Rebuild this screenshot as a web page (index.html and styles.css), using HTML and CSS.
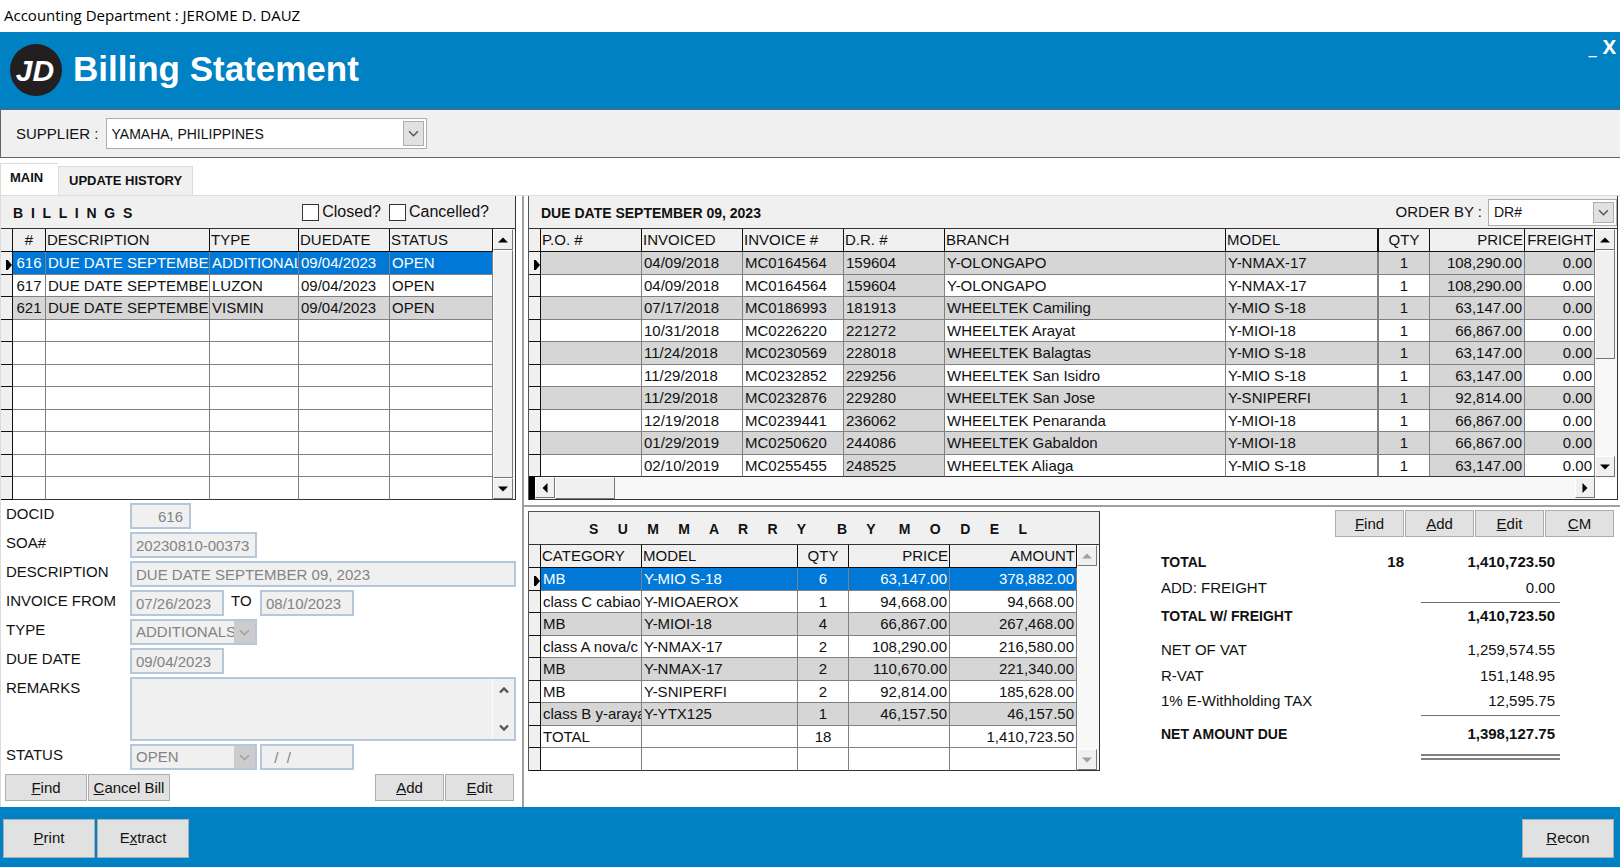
FILE: index.html
```html
<!DOCTYPE html>
<html lang="en">
<head>
    <meta charset="UTF-8">
    <meta name="viewport" content="width=device-width, initial-scale=1.0">
    <title>Billing Statement</title>
    <link rel="stylesheet" href="styles.css">
</head>
<body>
    <!-- shared arrow shapes -->
    <svg class="defs" width="0" height="0" aria-hidden="true">
        <symbol id="chev" viewBox="0 0 10 6"><path d="M1 1l4 4 4-4" fill="none" stroke="currentColor" stroke-width="1.4"/></symbol>
        <symbol id="chev-bold" viewBox="0 0 10 6"><path d="M1 1l4 4 4-4" fill="none" stroke="currentColor" stroke-width="2.4"/></symbol>
        <symbol id="tri" viewBox="0 0 10 6"><path d="M0 5.5h10L5 .5z" fill="currentColor"/></symbol>
    </svg>

    <div class="titlebar">Accounting Department : JEROME D. DAUZ</div>

    <header class="header">
        <svg class="logo" viewBox="0 0 52 52" role="img" aria-label="JD">
            <circle cx="26" cy="26" r="26" fill="#231f20"/>
            <text x="25" y="37" text-anchor="middle">JD</text>
        </svg>
        <h1>Billing Statement</h1>
        <div class="window-buttons">
            <button type="button" aria-label="Minimize">_</button>
            <button type="button" aria-label="Close">X</button>
        </div>
    </header>

    <div class="supplier-bar">
        <label for="supplier">SUPPLIER :</label>
        <span class="combo combo-supplier">
            <select id="supplier"><option>YAMAHA, PHILIPPINES</option></select>
            <span class="combo-arrow"><svg><use href="#chev"/></svg></span>
        </span>
    </div>

    <nav class="tabs">
        <button type="button" class="tab active">MAIN</button>
        <button type="button" class="tab">UPDATE HISTORY</button>
    </nav>

    <main class="workspace">
        <section class="left">
            <div class="panel">
                <div class="panel-head">
                    <h2>B  I  L  L  I  N  G  S</h2>
                    <div class="checks">
                        <label><input type="checkbox"> Closed?</label>
                        <label><input type="checkbox"> Cancelled?</label>
                    </div>
                </div>
                <div class="grid-wrap">
                    <table class="grid billings">
                        <colgroup><col class="w-sel"><col class="w-no"><col><col class="w-type"><col class="w-due"><col class="w-status"></colgroup>
                        <thead>
                            <tr><th></th><th class="c">#</th><th>DESCRIPTION</th><th>TYPE</th><th>DUEDATE</th><th>STATUS</th></tr>
                        </thead>
                        <tbody>
                            <tr class="selected"><td class="current"></td><td class="c">616</td><td>DUE DATE SEPTEMBER 09, 2023</td><td>ADDITIONALS</td><td>09/04/2023</td><td>OPEN</td></tr>
                            <tr><td></td><td class="c">617</td><td>DUE DATE SEPTEMBER 09, 2023</td><td>LUZON</td><td>09/04/2023</td><td>OPEN</td></tr>
                            <tr class="alt"><td></td><td class="c">621</td><td>DUE DATE SEPTEMBER 09, 2023</td><td>VISMIN</td><td>09/04/2023</td><td>OPEN</td></tr>
                            <tr><td></td><td></td><td></td><td></td><td></td><td></td></tr>
                            <tr><td></td><td></td><td></td><td></td><td></td><td></td></tr>
                            <tr><td></td><td></td><td></td><td></td><td></td><td></td></tr>
                            <tr><td></td><td></td><td></td><td></td><td></td><td></td></tr>
                            <tr><td></td><td></td><td></td><td></td><td></td><td></td></tr>
                            <tr><td></td><td></td><td></td><td></td><td></td><td></td></tr>
                            <tr><td></td><td></td><td></td><td></td><td></td><td></td></tr>
                            <tr><td></td><td></td><td></td><td></td><td></td><td></td></tr>
                        </tbody>
                    </table>
                    <div class="vscroll">
                        <button type="button" aria-label="Scroll up"><svg><use href="#tri"/></svg></button>
                        <div class="thumb full"></div>
                        <button type="button" class="down" aria-label="Scroll down"><svg><use href="#tri"/></svg></button>
                    </div>
                </div>
            </div>

            <form class="details">
                <label for="docid">DOCID</label>
                <div><input id="docid" class="w-docid" value="616" disabled></div>
                <label for="soa">SOA#</label>
                <div><input id="soa" class="w-soa" value="20230810-00373" disabled></div>
                <label for="desc">DESCRIPTION</label>
                <div><input id="desc" class="w-full" value="DUE DATE SEPTEMBER 09, 2023" disabled></div>
                <label for="from">INVOICE FROM</label>
                <div>
                    <input id="from" class="w-date" value="07/26/2023" disabled>
                    <label for="to" class="to">TO</label>
                    <input id="to" class="w-date" value="08/10/2023" disabled>
                </div>
                <label for="type">TYPE</label>
                <div>
                    <span class="combo disabled w-soa">
                        <select id="type" disabled><option>ADDITIONALS</option></select>
                        <span class="combo-arrow"><svg><use href="#chev"/></svg></span>
                    </span>
                </div>
                <label for="due">DUE DATE</label>
                <div><input id="due" class="w-date" value="09/04/2023" disabled></div>
                <label for="remarks">REMARKS</label>
                <div class="remarks">
                    <textarea id="remarks" disabled></textarea>
                    <span class="remarks-scroll">
                        <svg class="up"><use href="#chev-bold"/></svg>
                        <svg><use href="#chev-bold"/></svg>
                    </span>
                </div>
                <label for="status">STATUS</label>
                <div>
                    <span class="combo disabled w-soa">
                        <select id="status" disabled><option>OPEN</option></select>
                        <span class="combo-arrow"><svg><use href="#chev"/></svg></span>
                    </span>
                    <input class="w-date" value="  /  /" aria-label="Status date" disabled>
                </div>
            </form>

            <div class="left-actions">
                <button type="button" class="btn wide"><u>F</u>ind</button>
                <button type="button" class="btn wide"><u>C</u>ancel Bill</button>
                <span class="spacer"></span>
                <button type="button" class="btn"><u>A</u>dd</button>
                <button type="button" class="btn"><u>E</u>dit</button>
            </div>
        </section>

        <section class="right">
            <div class="right-top">
                <div class="panel bordered">
                    <div class="panel-head">
                        <h2>DUE DATE SEPTEMBER 09, 2023</h2>
                        <div class="order">
                            <label for="order">ORDER BY :</label>
                            <span class="combo combo-order">
                                <select id="order"><option>DR#</option></select>
                                <span class="combo-arrow"><svg><use href="#chev"/></svg></span>
                            </span>
                        </div>
                    </div>
                    <div class="grid-wrap">
                        <div class="grid-main">
                            <table class="grid invoices">
                                <colgroup><col class="w-sel"><col class="w-inv"><col class="w-inv"><col class="w-inv"><col class="w-inv"><col><col class="w-model"><col class="w-qty"><col class="w-price"><col class="w-freight"></colgroup>
                                <thead>
                                    <tr><th></th><th>P.O. #</th><th>INVOICED</th><th>INVOICE #</th><th>D.R. #</th><th>BRANCH</th><th>MODEL</th><th class="c">QTY</th><th class="r">PRICE</th><th class="r">FREIGHT</th></tr>
                                </thead>
                                <tbody>
                                    <tr class="alt"><td class="current"></td><td></td><td>04/09/2018</td><td>MC0164564</td><td>159604</td><td>Y-OLONGAPO</td><td>Y-NMAX-17</td><td class="c">1</td><td class="r">108,290.00</td><td class="r">0.00</td></tr>
                                    <tr><td></td><td></td><td>04/09/2018</td><td>MC0164564</td><td>159604</td><td>Y-OLONGAPO</td><td>Y-NMAX-17</td><td class="c">1</td><td class="r">108,290.00</td><td class="r">0.00</td></tr>
                                    <tr class="alt"><td></td><td></td><td>07/17/2018</td><td>MC0186993</td><td>181913</td><td>WHEELTEK Camiling</td><td>Y-MIO S-18</td><td class="c">1</td><td class="r">63,147.00</td><td class="r">0.00</td></tr>
                                    <tr><td></td><td></td><td>10/31/2018</td><td>MC0226220</td><td>221272</td><td>WHEELTEK Arayat</td><td>Y-MIOI-18</td><td class="c">1</td><td class="r">66,867.00</td><td class="r">0.00</td></tr>
                                    <tr class="alt"><td></td><td></td><td>11/24/2018</td><td>MC0230569</td><td>228018</td><td>WHEELTEK Balagtas</td><td>Y-MIO S-18</td><td class="c">1</td><td class="r">63,147.00</td><td class="r">0.00</td></tr>
                                    <tr><td></td><td></td><td>11/29/2018</td><td>MC0232852</td><td>229256</td><td>WHEELTEK San Isidro</td><td>Y-MIO S-18</td><td class="c">1</td><td class="r">63,147.00</td><td class="r">0.00</td></tr>
                                    <tr class="alt"><td></td><td></td><td>11/29/2018</td><td>MC0232876</td><td>229280</td><td>WHEELTEK San Jose</td><td>Y-SNIPERFI</td><td class="c">1</td><td class="r">92,814.00</td><td class="r">0.00</td></tr>
                                    <tr><td></td><td></td><td>12/19/2018</td><td>MC0239441</td><td>236062</td><td>WHEELTEK Penaranda</td><td>Y-MIOI-18</td><td class="c">1</td><td class="r">66,867.00</td><td class="r">0.00</td></tr>
                                    <tr class="alt"><td></td><td></td><td>01/29/2019</td><td>MC0250620</td><td>244086</td><td>WHEELTEK Gabaldon</td><td>Y-MIOI-18</td><td class="c">1</td><td class="r">66,867.00</td><td class="r">0.00</td></tr>
                                    <tr><td></td><td></td><td>02/10/2019</td><td>MC0255455</td><td>248525</td><td>WHEELTEK Aliaga</td><td>Y-MIO S-18</td><td class="c">1</td><td class="r">63,147.00</td><td class="r">0.00</td></tr>
                                </tbody>
                            </table>
                            <div class="hscroll">
                                <button type="button" class="prev" aria-label="Scroll left"><svg><use href="#tri"/></svg></button>
                                <div class="thumb"></div>
                                <button type="button" class="next" aria-label="Scroll right"><svg><use href="#tri"/></svg></button>
                            </div>
                        </div>
                        <div class="vscroll short">
                            <button type="button" aria-label="Scroll up"><svg><use href="#tri"/></svg></button>
                            <div class="thumb"></div>
                            <button type="button" class="down" aria-label="Scroll down"><svg><use href="#tri"/></svg></button>
                        </div>
                    </div>
                </div>
            </div>

            <div class="right-bottom">
                <div class="panel bordered summary-panel">
                    <div class="panel-head">
                        <h2>S     U     M     M     A     R     R     Y        B     Y      M     O     D     E     L</h2>
                    </div>
                    <div class="grid-wrap">
                        <table class="grid summary">
                            <colgroup><col class="w-sel"><col class="w-inv"><col><col class="w-qty"><col class="w-inv"><col class="w-amount"></colgroup>
                            <thead>
                                <tr><th></th><th>CATEGORY</th><th>MODEL</th><th class="c">QTY</th><th class="r">PRICE</th><th class="r">AMOUNT</th></tr>
                            </thead>
                            <tbody>
                                <tr class="selected"><td class="current"></td><td>MB</td><td>Y-MIO S-18</td><td class="c">6</td><td class="r">63,147.00</td><td class="r">378,882.00</td></tr>
                                <tr><td></td><td>class C cabiao</td><td>Y-MIOAEROX</td><td class="c">1</td><td class="r">94,668.00</td><td class="r">94,668.00</td></tr>
                                <tr class="alt"><td></td><td>MB</td><td>Y-MIOI-18</td><td class="c">4</td><td class="r">66,867.00</td><td class="r">267,468.00</td></tr>
                                <tr><td></td><td>class A nova/c</td><td>Y-NMAX-17</td><td class="c">2</td><td class="r">108,290.00</td><td class="r">216,580.00</td></tr>
                                <tr class="alt"><td></td><td>MB</td><td>Y-NMAX-17</td><td class="c">2</td><td class="r">110,670.00</td><td class="r">221,340.00</td></tr>
                                <tr><td></td><td>MB</td><td>Y-SNIPERFI</td><td class="c">2</td><td class="r">92,814.00</td><td class="r">185,628.00</td></tr>
                                <tr class="alt"><td></td><td>class B y-araya</td><td>Y-YTX125</td><td class="c">1</td><td class="r">46,157.50</td><td class="r">46,157.50</td></tr>
                                <tr><td></td><td>TOTAL</td><td></td><td class="c">18</td><td></td><td class="r">1,410,723.50</td></tr>
                                <tr><td></td><td></td><td></td><td></td><td></td><td></td></tr>
                            </tbody>
                        </table>
                        <div class="vscroll inactive">
                            <button type="button" aria-label="Scroll up" disabled><svg><use href="#tri"/></svg></button>
                            <button type="button" class="down" aria-label="Scroll down" disabled><svg><use href="#tri"/></svg></button>
                        </div>
                    </div>
                </div>

                <div class="totals-side">
                    <div class="totals-actions">
                        <button type="button" class="btn"><u>F</u>ind</button>
                        <button type="button" class="btn"><u>A</u>dd</button>
                        <button type="button" class="btn"><u>E</u>dit</button>
                        <button type="button" class="btn"><u>C</u>M</button>
                    </div>
                    <table class="totals">
                        <colgroup><col><col class="w-count"><col class="w-sum"></colgroup>
                        <tr class="strong"><th>TOTAL</th><td class="count">18</td><td>1,410,723.50</td></tr>
                        <tr class="line"><th>ADD: FREIGHT</th><td></td><td>0.00</td></tr>
                        <tr class="strong"><th>TOTAL W/ FREIGHT</th><td></td><td>1,410,723.50</td></tr>
                        <tr class="gap"><th>NET OF VAT</th><td></td><td>1,259,574.55</td></tr>
                        <tr><th>R-VAT</th><td></td><td>151,148.95</td></tr>
                        <tr class="line"><th>1% E-Withholding TAX</th><td></td><td>12,595.75</td></tr>
                        <tr class="strong net"><th>NET AMOUNT DUE</th><td></td><td>1,398,127.75</td></tr>
                    </table>
                </div>
            </div>
        </section>
    </main>

    <footer class="footer">
        <button type="button" class="btn big"><u>P</u>rint</button>
        <button type="button" class="btn big">E<u>x</u>tract</button>
        <span class="spacer"></span>
        <button type="button" class="btn big"><u>R</u>econ</button>
    </footer>
</body>
</html>
```
FILE: styles.css
```css
* {
    box-sizing: border-box;
}
body {
    display: flex;
    flex-direction: column;
    min-height: 100vh;
    margin: 0;
    background: #fff;
    color: #111;
    font-family: "Liberation Sans", Arial, sans-serif;
    font-size: 15px;
    line-height: 18px;
}
h1, h2 {
    margin: 0;
}
button, input, select, textarea {
    font: inherit;
    color: inherit;
}
.defs {
    position: absolute;
}
.spacer {
    flex: 1;
}

/* title + header */
.titlebar {
    height: 32px;
    padding-left: 4px;
    font-family: "Open Sans", "Noto Sans", sans-serif;
    font-size: 15px;
    line-height: 30px;
    color: #000;
}
.header {
    display: flex;
    align-items: center;
    height: 77px;
    padding: 0 4px 2px 10px;
    background: #0081c3;
    color: #fff;
}
.logo {
    width: 52px;
    height: 52px;
}
.logo text {
    font-size: 30px;
    font-weight: bold;
    font-style: italic;
    fill: #fff;
}
.header h1 {
    flex: 1;
    padding: 0 0 2px 11px;
    font-size: 35px;
    line-height: 40px;
}
.window-buttons {
    display: flex;
    gap: 6px;
    align-self: flex-start;
    padding-top: 4px;
}
.window-buttons button {
    padding: 0;
    border: 0;
    background: none;
    font-family: "Open Sans", sans-serif;
    font-size: 20px;
    font-weight: bold;
    line-height: 22px;
}

/* supplier */
.supplier-bar {
    display: flex;
    align-items: center;
    gap: 7px;
    height: 49px;
    padding-left: 15px;
    background: #f0f0f0;
    border: 1px solid #646464;
    border-right: 0;
}
.combo {
    position: relative;
    display: inline-flex;
    border: 1px solid #abadb3;
    background: #fff;
}
.combo select {
    width: 100%;
    padding: 0 0 0 5px;
    border: 0;
    border-radius: 0;
    appearance: none;
    background: none;
    font-size: 14px;
}
.combo-arrow {
    position: absolute;
    top: 2px;
    right: 2px;
    bottom: 2px;
    display: flex;
    align-items: center;
    justify-content: center;
    width: 21px;
    border: 1px solid #adadad;
    background: #e1e1e1;
    color: #555;
    pointer-events: none;
}
.combo-arrow svg {
    width: 11px;
    height: 7px;
}
.combo-supplier {
    width: 321px;
    height: 31px;
}
.combo-order {
    width: 129px;
    height: 27px;
}

/* tabs */
.tabs {
    display: flex;
    align-items: flex-end;
    height: 38px;
    border-bottom: 1px solid #dcdcdc;
}
.tab {
    height: 29px;
    padding: 0 10px;
    border: 1px solid #dcdcdc;
    border-bottom: 0;
    background: #f0f0f0;
    font-size: 13px;
    font-weight: bold;
}
.tab.active {
    width: 58px;
    height: 32px;
    padding: 0 0 4px 9px;
    border-right: 0;
    background: #fff;
    text-align: left;
}

/* layout */
.workspace {
    display: grid;
    grid-template-columns: 521px minmax(0, 1fr);
    flex: 1;
    border-left: 1px solid #dcdcdc;
}
.left {
    padding-right: 6px;
}
.right {
    display: flex;
    flex-direction: column;
    border-left: 2px solid #a0a0a0;
}
.right-top {
    padding: 0 2px 5px 4px;
    border-bottom: 2px solid #a0a0a0;
}
.right-bottom {
    display: flex;
    align-items: flex-start;
    padding: 3px 6px 0 4px;
}
.panel {
    border-right: 1px solid #333;
    background: #f0f0f0;
}
.panel.bordered {
    border-left: 1px solid #555;
}
.panel-head {
    display: flex;
    align-items: center;
    justify-content: space-between;
    height: 33px;
    padding: 0 12px;
    border-bottom: 1px solid #333;
}
.panel-head h2 {
    padding-top: 2px;
    font-size: 14px;
    line-height: 18px;
    white-space: pre;
}
.checks {
    display: flex;
    gap: 8px;
    padding-right: 14px;
}
.checks label {
    display: flex;
    align-items: center;
    gap: 3px;
    font-size: 16px;
}
.checks input {
    width: 17px;
    height: 17px;
    margin: 0;
    border: 1px solid #333;
    appearance: none;
    background: #fff;
}
.order {
    display: flex;
    align-items: center;
    gap: 6px;
    margin-right: -12px;
}

/* grids */
.grid-wrap {
    display: flex;
}
.grid-main {
    flex: 1;
    min-width: 0;
}
.grid {
    width: 100%;
    table-layout: fixed;
    border-spacing: 0;
    background: #fff;
}
.grid th, .grid td {
    height: 23px;
    padding: 0 2px;
    border-right: 1px solid #808080;
    border-bottom: 1px solid #808080;
    overflow: hidden;
    white-space: nowrap;
    text-align: left;
    text-overflow: clip;
    font-weight: normal;
    line-height: 20px;
}
.grid th {
    padding: 0 1px;
    background: #f0f0f0;
    border-color: #111;
}
.grid tr:nth-child(even) td {
    height: 22px;
}
.grid tbody tr:last-child td {
    border-bottom-color: #333;
}
.grid .alt td {
    background: #d6d6d6;
}
.grid .selected td {
    background: #0078d7;
    color: #fff;
}
.grid th:first-child, .grid tbody tr td:first-child {
    padding: 0;
    background: #f0f0f0;
    border-color: #111;
}
.grid .c {
    text-align: center;
}
.grid .r {
    text-align: right;
}
/* record pointer in the selector column */
.current::before {
    content: "";
    display: block;
    width: 6px;
    height: 10px;
    margin: 4px 0 0 5px;
    background: #000;
    clip-path: polygon(0 0, 30% 0, 100% 50%, 30% 100%, 0 100%);
}
.invoices td:nth-child(5), .invoices td:nth-child(9) {
    background: #d6d6d6;
}
.invoices th:nth-child(7), .invoices td:nth-child(7) {
    border-right-width: 2px;
}
.w-sel { width: 12px; }
.w-no { width: 33px; }
.w-type { width: 89px; }
.w-due { width: 91px; }
.w-status { width: 103px; }
.w-inv { width: 101px; }
.w-model { width: 153px; }
.w-qty { width: 51px; }
.w-price { width: 95px; }
.w-freight { width: 70px; }
.w-amount { width: 127px; }

/* scrollbars */
.vscroll {
    display: flex;
    flex: none;
    flex-direction: column;
    width: 22px;
    padding-right: 2px;
    border-bottom: 1px solid #333;
    background: #f8f8f8;
}
.vscroll button, .hscroll button, .thumb {
    display: flex;
    flex: none;
    align-items: center;
    justify-content: center;
    width: 20px;
    height: 21px;
    padding: 0;
    border: 1px solid;
    border-color: #fff #777 #777 #fff;
    background: #f0f0f0;
    color: #000;
}
.vscroll svg, .hscroll svg {
    width: 10px;
    height: 6px;
}
.vscroll .down {
    margin-top: auto;
}
.down svg {
    transform: rotate(180deg);
}
.vscroll .thumb {
    height: 109px;
}
.vscroll .thumb.full {
    flex: 1;
    height: auto;
}
.vscroll.short {
    padding-bottom: 22px;
    background: linear-gradient(#f8f8f8, #f8f8f8) no-repeat 0 0 / 100% 249px #fff;
}
.vscroll.inactive button {
    color: #a0a0a0;
}
.hscroll {
    display: flex;
    height: 23px;
    border-left: 6px solid #000;
    border-bottom: 1px solid #333;
    background: #f8f8f8;
}
.hscroll .thumb {
    width: 60px;
    height: 22px;
}
.hscroll .next {
    margin-left: auto;
}
.prev svg {
    transform: rotate(-90deg);
}
.next svg {
    transform: rotate(90deg);
}

/* billing details */
.details {
    display: grid;
    grid-template-columns: 124px minmax(0, 1fr);
    row-gap: 3px;
    padding: 3px 0 0 5px;
}
.details > label {
    padding-top: 2px;
}
.details > div {
    display: flex;
    gap: 3px;
}
.details input, .details .combo, .remarks {
    height: 26px;
    border: 2px solid #b4c7dc;
    background: #f0f0f0;
    color: #838383;
}
.details input {
    padding: 1px 4px 0;
    white-space: pre;
}
.details select {
    padding-left: 4px;
    opacity: 1;
    font-size: 15px;
}
.details .combo-arrow {
    top: 0;
    right: 0;
    bottom: 0;
    border: 0;
    background: #ccc;
    color: #a0a0a0;
}
.details #docid {
    padding-right: 6px;
    text-align: right;
}
.w-docid { width: 61px; }
.w-soa { width: 127px; }
.w-date { width: 94px; }
.w-full { width: 100%; }
.to {
    width: 30px;
    padding: 2px 0 0 4px;
}
.details .remarks {
    height: 64px;
}
.remarks textarea {
    flex: 1;
    border: 0;
    resize: none;
    background: none;
}
.remarks-scroll {
    display: flex;
    flex-direction: column;
    justify-content: space-between;
    align-items: center;
    width: 22px;
    padding: 8px 0;
    border-left: 1px solid #fafafa;
    color: #555;
}
.remarks-scroll svg {
    width: 10px;
    height: 7px;
}
.remarks-scroll .up {
    transform: rotate(180deg);
}

/* buttons */
.btn {
    width: 69px;
    height: 27px;
    padding: 0;
    border: 1px solid #adadad;
    background: #e1e1e1;
}
.btn.wide {
    width: 82px;
}
.btn.big {
    width: 92px;
    height: 39px;
}
.left-actions {
    display: flex;
    gap: 1px;
    padding: 4px 2px 6px 4px;
}
.footer {
    display: flex;
    align-items: center;
    gap: 2px;
    height: 60px;
    padding: 2px 6px 0 3px;
    background: #0081c3;
}

/* summary + totals */
.summary-panel {
    width: 572px;
    margin-top: 1px;
    border-top: 1px solid #555;
}
.summary-panel .panel-head {
    justify-content: center;
    padding-right: 24px;
}
.totals-side {
    flex: 1;
    padding-left: 61px;
}
.totals-actions {
    display: flex;
    justify-content: flex-end;
    gap: 1px;
}
.totals {
    width: calc(100% - 54px);
    margin-top: 12px;
    table-layout: fixed;
    border-spacing: 0;
}
.totals th, .totals td {
    height: 25px;
    padding: 0;
    font-weight: normal;
    text-align: left;
    white-space: nowrap;
}
.totals td {
    padding-right: 5px;
    text-align: right;
}
.totals .count {
    padding-right: 17px;
}
.totals .strong th, .totals .strong td {
    height: 26px;
    font-weight: bold;
}
.totals .strong th {
    font-size: 14px;
}
.totals .line th, .totals .line td {
    height: 28px;
    padding-bottom: 2px;
}
.totals .line td:last-child {
    border-bottom: 1px solid #707070;
}
.totals .gap th, .totals .gap td {
    height: 34px;
    padding-top: 8px;
}
.totals .net th, .totals .net td {
    height: 44px;
    padding-bottom: 2px;
}
.totals .net th {
    padding-bottom: 8px;
}
.totals .net td:last-child {
    border-bottom: 6px double #808080;
}
.w-count { width: 90px; }
.w-sum { width: 139px; }
```
